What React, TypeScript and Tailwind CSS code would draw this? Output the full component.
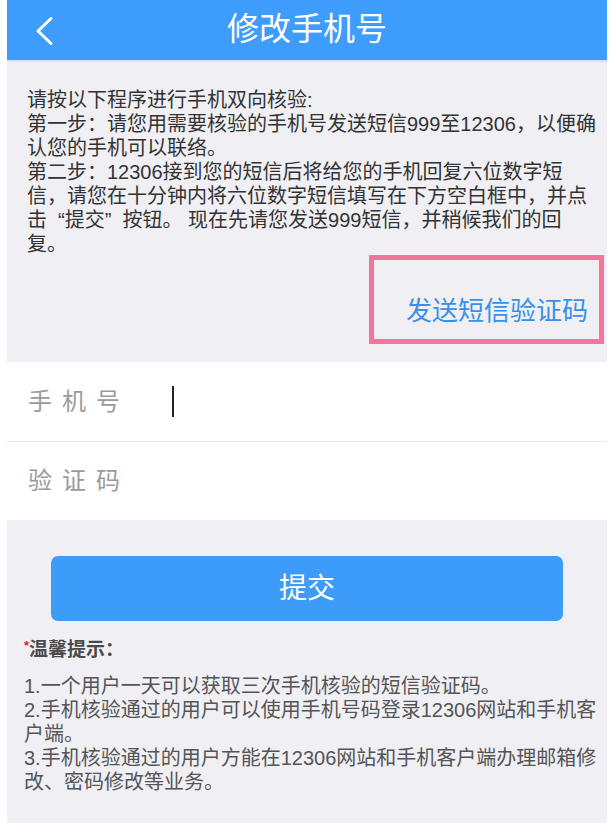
import React from "react";

const font = { fontFamily: '"Liberation Sans", "Noto Sans CJK SC", sans-serif' };

const BackIcon = () => (
  <svg width="20" height="30" viewBox="0 0 20 30" fill="none">
    <path d="M17 2.5 L4 15 L17 27.5" stroke="white" strokeWidth="3" strokeLinecap="round" strokeLinejoin="round" />
  </svg>
);

const InputRow = ({ label, cursor, last }: { label: string; cursor?: boolean; last?: boolean }) => (
  <div className={`flex items-center bg-white pl-[21px] ${last ? "h-[78px]" : "h-[80px] border-b border-[#e8e8ec]"}`}>
    <span className="w-[144px] text-[24px] leading-[30px] tracking-[10px] text-[#9a9a9a]">{label}</span>
    {cursor && <span className="block h-[31px] w-[2px] bg-[#222]" />}
  </div>
);

export default function App() {
  return (
    <div className="min-h-screen bg-white pl-[7px] pr-[6px]" style={font}>
      <div className="min-h-[823px] bg-[#efeff4]">
        <header className="grid h-[62px] grid-cols-[1fr_auto_1fr] items-center border-b-2 border-[#cfe5fd] bg-[#3d9cfc]">
          <div className="pl-[27px] pt-[1px]">
            <BackIcon />
          </div>
          <h1 className="pb-[2px] text-[32px] leading-[40px] text-white">修改手机号</h1>
          <div />
        </header>

        <section className="pl-[20px] pr-[9px] pt-[26px] text-[20px] leading-[24px] text-[#333]">
          <p>请按以下程序进行手机双向核验:</p>
          <p>第一步：请您用需要核验的手机号发送短信999至12306，以便确认您的手机可以联络。</p>
          <p>
            {"第二步：12306接到您的短信后将给您的手机回复六位数字短信，请您在十分钟内将六位数字短信填写在下方空白框中，并点击\u00A0\u00A0“提交”\u00A0\u00A0按钮。 现在先请您发送999短信，并稍候我们的回复。"}
          </p>
        </section>

        <div className="-mt-[1px] flex justify-end pr-[3px] pb-[18px]">
          <button
            type="button"
            className="flex h-[89px] w-[235px] items-end justify-end border-[5px] border-[#f2769c] pr-[11px] pb-[13px] text-[26px] leading-[30px] text-[#3a8fe6]"
          >
            发送短信验证码
          </button>
        </div>

        <InputRow label="手机号" cursor />
        <InputRow label="验证码" last />

        <div className="px-[44px] pt-[36px]">
          <button
            type="button"
            className="flex h-[65px] w-full items-center justify-center rounded-[7px] bg-[#3d9bfa] text-[28px] text-white"
          >
            提交
          </button>
        </div>

        <section className="pl-[17px] pr-[7px] pt-[17px] pb-[30px] text-[#555]">
          <p className="text-[19px] font-bold leading-[24px] text-[#4a4a4a]">
            <span className="align-top text-[13px] leading-[16px] text-[#e4161b]">*</span>温馨提示：
          </p>
          <div className="mt-[12px] text-[20px] leading-[24px]">
            <p>1.一个用户一天可以获取三次手机核验的短信验证码。</p>
            <p>2.手机核验通过的用户可以使用手机号码登录12306网站和手机客户端。</p>
            <p>3.手机核验通过的用户方能在12306网站和手机客户端办理邮箱修改、密码修改等业务。</p>
          </div>
        </section>
      </div>
    </div>
  );
}
